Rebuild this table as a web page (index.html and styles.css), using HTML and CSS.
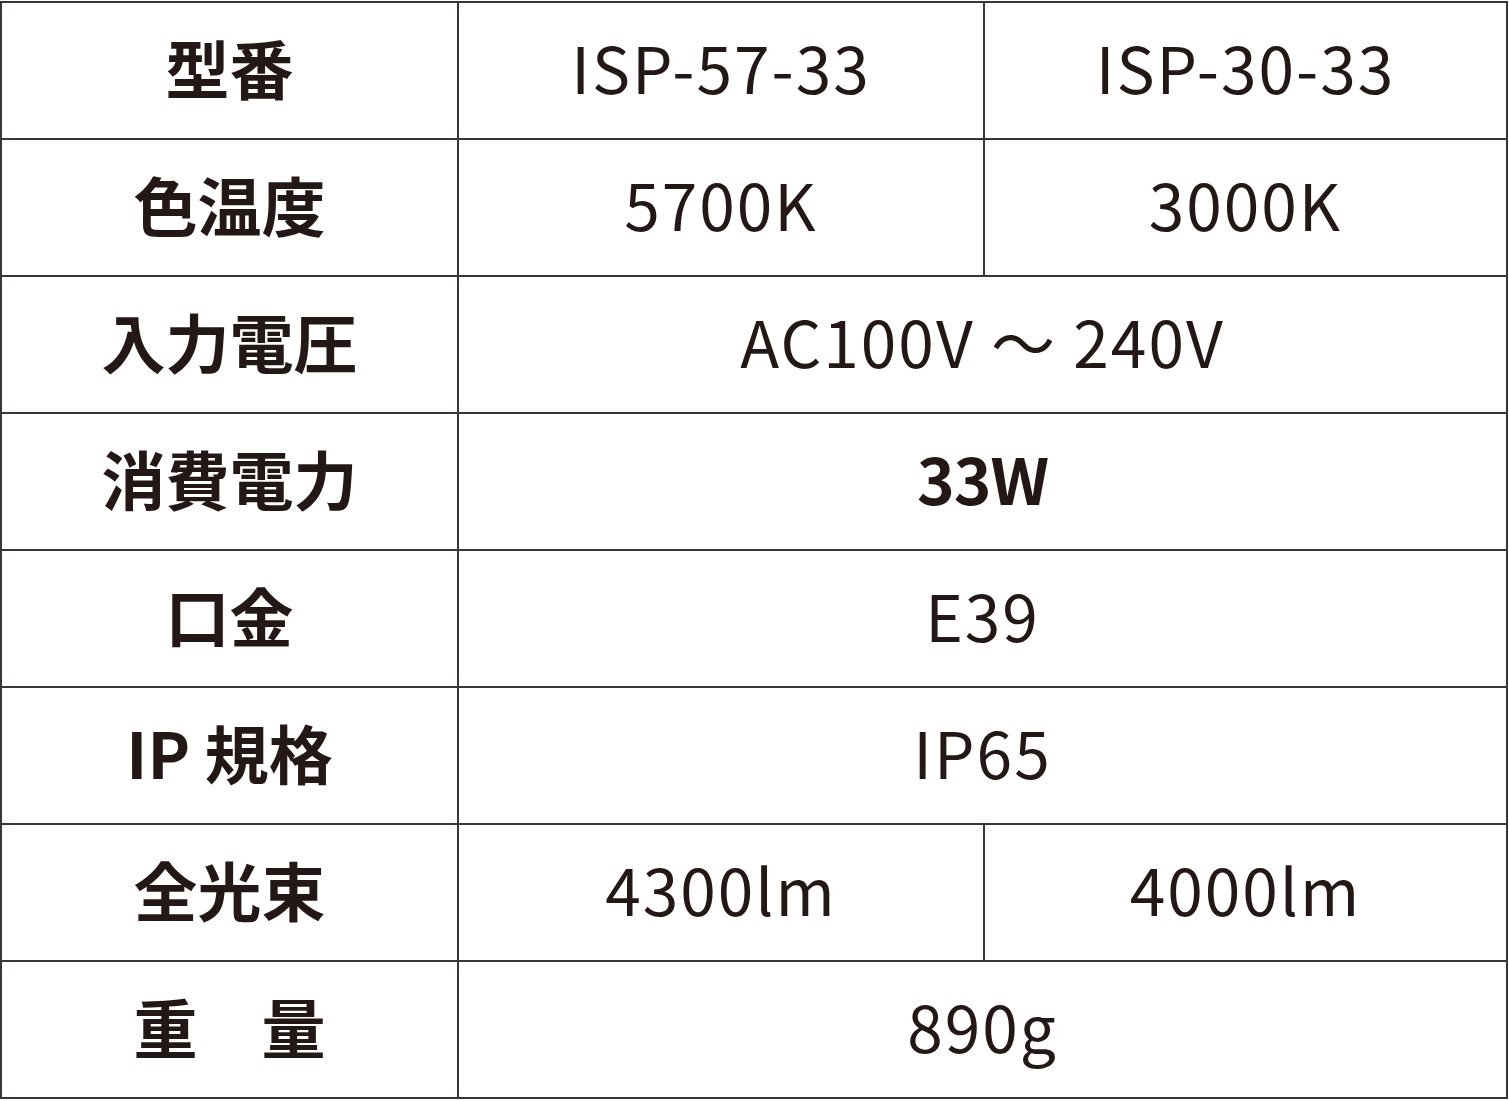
FILE: index.html
```html
<!DOCTYPE html>
<html lang="ja">
<head>
<meta charset="utf-8">
<link rel="stylesheet" href="styles.css">
</head>
<body>
<div class="spec">
  <div class="cell label">型番</div>
  <div class="cell val">ISP-57-33</div>
  <div class="cell val">ISP-30-33</div>

  <div class="cell label">色温度</div>
  <div class="cell val">5700K</div>
  <div class="cell val">3000K</div>

  <div class="cell label">入力電圧</div>
  <div class="cell val span">AC100V ～ 240V</div>

  <div class="cell label">消費電力</div>
  <div class="cell val span bold">33W</div>

  <div class="cell label">口金</div>
  <div class="cell val span">E39</div>

  <div class="cell label">IP 規格</div>
  <div class="cell val span">IP65</div>

  <div class="cell label">全光束</div>
  <div class="cell val">4300lm</div>
  <div class="cell val">4000lm</div>

  <div class="cell label">重　量</div>
  <div class="cell val span">890g</div>
</div>
</body>
</html>
```

FILE: styles.css
```css
html, body {
  margin: 0;
  padding: 0;
  background: #ffffff;
}
body {
  padding-top: 1px;
}
.spec {
  display: grid;
  grid-template-columns: 455px 524px 521px;
  grid-template-rows: repeat(8, 135px);
  gap: 2px;
  padding: 2px;
  width: max-content;
  background: #3a3636;
  font-family: "Noto Sans CJK JP", "Noto Sans", sans-serif;
  color: #231815;
}
.cell {
  background: #ffffff;
  display: flex;
  align-items: center;
  justify-content: center;
  font-size: 64px;
  line-height: 1;
  padding-bottom: 9px;
  box-sizing: border-box;
}
.label {
  font-weight: 700;
}
.val {
  font-weight: 400;
  letter-spacing: 2px;
}
.span {
  grid-column: span 2;
}
.bold {
  font-weight: 700;
  letter-spacing: -1px;
}
```
